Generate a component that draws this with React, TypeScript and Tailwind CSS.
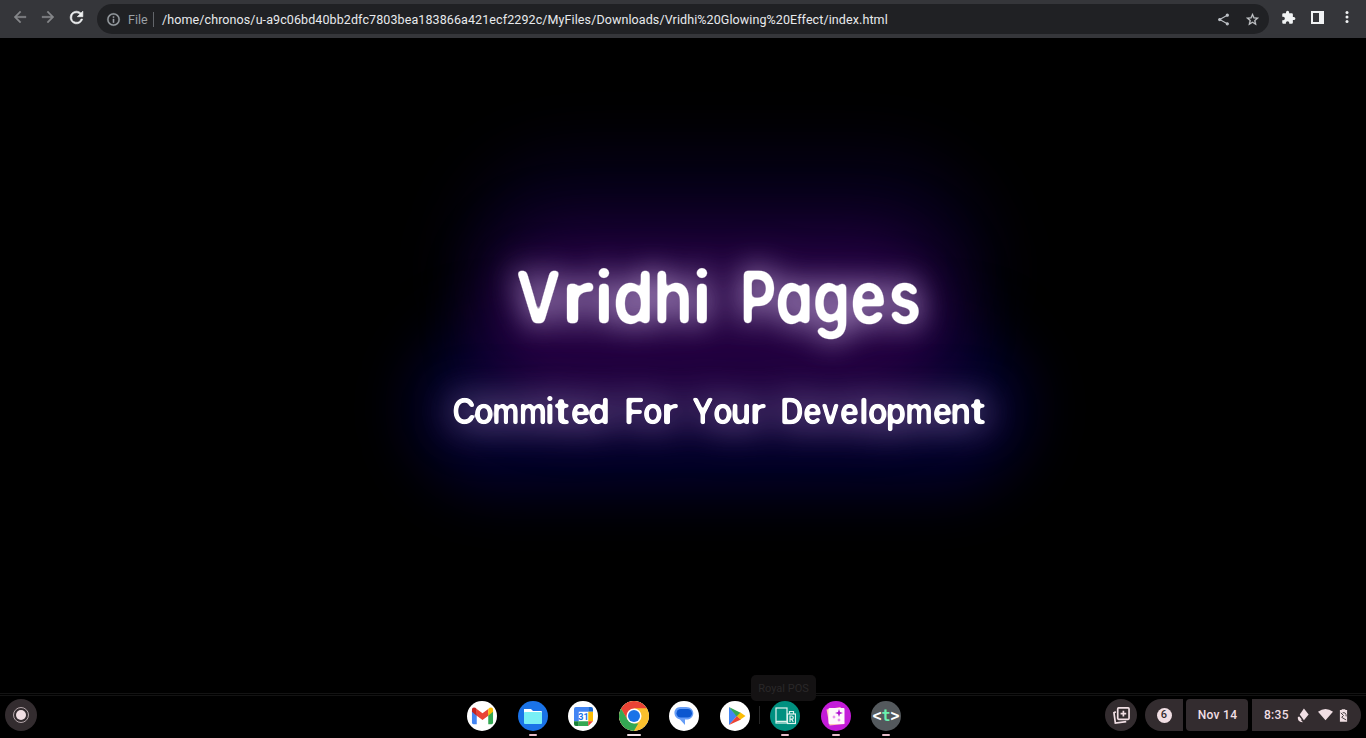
import React from "react";

type P = { className?: string };

const Dot = () => <span className="h-0.5 w-2 rounded-full bg-[#e8bfcb]" />;

function ShelfApp({ bg, run, children }: { bg: string; run?: "dot" | "bar"; children: React.ReactNode }) {
  return (
    <div className="flex h-[36px] w-[30px] flex-col items-center justify-between pb-[1px]">
      <div className={"flex h-[30px] w-[30px] shrink-0 items-center justify-center overflow-hidden rounded-full " + bg}>{children}</div>
      {run === "dot" && <Dot />}
      {run === "bar" && <span className="h-0.5 w-3.5 rounded-full bg-[#f1dfe4]" />}
    </div>
  );
}

function Arrow({ className }: P) {
  return (
    <svg viewBox="0 0 24 24" className={className} fill="#85878a" stroke="#85878a" strokeWidth=".5">
      <path d="M20 11H7.83l5.59-5.59L12 4l-8 8 8 8 1.41-1.41L7.83 13H20v-2z" />
    </svg>
  );
}

function Toolbar() {
  return (
    <header className="flex h-[38px] shrink-0 items-center bg-[#35363a]">
      <div className="mb-1 flex w-[97px] items-center gap-[10px] pl-[11px]">
        <Arrow className="size-[18px]" />
        <Arrow className="size-[18px] rotate-180" />
        <svg viewBox="0 0 24 24" className="size-[19px]" fill="#f1f3f4" stroke="#f1f3f4" strokeWidth=".8">
          <path d="M17.65 6.35A7.96 7.96 0 0 0 12 4a8 8 0 1 0 7.73 10h-2.08A6 6 0 1 1 12 6c1.66 0 3.14.69 4.22 1.78L13 11h7V4l-2.35 2.35z" />
        </svg>
      </div>
      <div className="flex h-[30px] w-[1172px] items-center rounded-full bg-[#202124] pl-[9px] font-[Roboto,sans-serif] text-[13px]">
        <svg viewBox="0 0 24 24" className="size-[15px]" fill="#9aa0a6" stroke="#9aa0a6" strokeWidth=".5">
          <path d="M11 7h2v2h-2zm0 4h2v6h-2zm1-9a10 10 0 1 0 0 20 10 10 0 0 0 0-20zm0 18a8 8 0 1 1 0-16 8 8 0 0 1 0 16z" />
        </svg>
        <span className="ml-[7px] mt-0.5 w-[25px] text-[12.5px] text-[#9aa0a6]">File</span>
        <span className="h-[15px] w-px bg-[#62656a]" />
        <span className="ml-2 mt-0.5 w-[1055px] whitespace-nowrap text-[12.5px] tracking-[0.1px] text-[#e8eaed]">/home/chronos/u-a9c06bd40bb2dfc7803bea183866a421ecf2292c/MyFiles/Downloads/Vridhi%20Glowing%20Effect/index.html</span>
        <svg viewBox="0 0 24 24" className="size-[13px] shrink-0" fill="#bdc1c6" stroke="#bdc1c6" strokeWidth="2">
          <path d="M19 4 5 12l14 8" fill="none" /><circle cx="19" cy="4" r="2" /><circle cx="5" cy="12" r="2" /><circle cx="19" cy="20" r="2" />
        </svg>
        <svg viewBox="0 0 24 24" className="ml-[15px] size-[15px] shrink-0" fill="#c8cacd" stroke="#c8cacd" strokeWidth=".5">
          <path d="m22 9.24-7.19-.62L12 2 9.19 8.63 2 9.24l5.46 4.73L5.82 21 12 17.27 18.18 21l-1.63-7.03L22 9.24zM12 15.4l-3.76 2.27 1-4.28-3.32-2.88 4.38-.38L12 6.1l1.71 4.04 4.38.38-3.32 2.88 1 4.28L12 15.4z" />
        </svg>
      </div>
      <div className="mb-1 flex items-center pl-[12px]">
        <svg viewBox="0 0 24 24" className="size-[15px]" fill="#f1f3f4">
          <path d="M20.5 11H19V7a2 2 0 0 0-2-2h-4V3.500a2.500 2.500 0 0 0-5 0V5H4a2 2 0 0 0-2 2v3.800h1.500a2.700 2.700 0 0 1 0 5.400H2V20c0 1.100.9 2 2 2h3.800v-1.500a2.700 2.700 0 0 1 5.400 0V22H17a2 2 0 0 0 2-2v-4h1.500a2.500 2.500 0 0 0 0-5z" />
        </svg>
        <span className="ml-[15px] h-[13px] w-[13px] border-2 border-r-[5px] border-[#f1f3f4]" />
        <svg viewBox="0 0 16 16" className="ml-[15px] size-4" fill="#f1f3f4">
          <circle cx="8" cy="3.500" r="1.500" /><circle cx="8" cy="8" r="1.500" /><circle cx="8" cy="12.500" r="1.500" />
        </svg>
      </div>
    </header>
  );
}

// Each letter: glyph, cell width in px, horizontal scale.
type Letter = [string, number, number];

const TITLE: Letter[] = [
  ["V", 43, 0.86], ["r", 36, 1.15], ["i", 16, 1], ["d", 42, 0.9], ["h", 39, 0.89], ["i", 18, 1],
  [" ", 30, 1],
  ["P", 34, 0.78], ["a", 38, 0.84], ["g", 37, 0.82], ["e", 37, 0.84], ["s", 35, 0.82],
];

const SUBTITLE: Letter[] = [
  ["C", 22, 0.9], ["o", 18, 0.91], ["m", 26, 0.84], ["m", 27, 0.87], ["i", 8, 1], ["t", 17, 1.2], ["e", 18, 0.9], ["d", 20, 0.96],
  [" ", 15, 1],
  ["F", 20, 0.97], ["o", 18, 0.91], ["r", 17, 1.2],
  [" ", 12, 1],
  ["Y", 23, 0.87], ["o", 17, 0.89], ["u", 19, 0.93], ["r", 16, 1.15],
  [" ", 14, 1],
  ["D", 23, 0.91], ["e", 19, 0.88], ["v", 17, 0.85], ["e", 20, 0.9], ["l", 10, 1], ["o", 18, 0.9], ["p", 19, 0.9], ["m", 26, 0.85], ["e", 20, 0.9], ["n", 18, 0.95], ["t", 16, 1.2],
];

function Lettering({ letters }: { letters: Letter[] }) {
  return (
    <>
      {letters.map(([ch, w, s], i) => (
        <span key={i} className="flex shrink-0 justify-center whitespace-pre" style={{ width: w }}>
          <span className="inline-block" style={{ transform: `scaleX(${s})` }}>{ch}</span>
        </span>
      ))}
    </>
  );
}

function Hero() {
  return (
    <main className="relative flex h-[656px] shrink-0 flex-col items-start overflow-hidden bg-black font-[Inter,sans-serif] text-white [font-feature-settings:'cv11']">
      <svg className="absolute size-0" aria-hidden="true">
        <filter id="round-lg" colorInterpolationFilters="sRGB">
          <feGaussianBlur stdDeviation="2.1" />
          <feComponentTransfer><feFuncA type="linear" slope="5" intercept="-1.7" /></feComponentTransfer>
        </filter>
        <filter id="round-sm" colorInterpolationFilters="sRGB">
          <feGaussianBlur stdDeviation="1.1" />
          <feComponentTransfer><feFuncA type="linear" slope="3.5" intercept="-1" /></feComponentTransfer>
        </filter>
      </svg>
      <div className="absolute left-[460px] top-[115px] h-[240px] w-[530px] rounded-[110px] bg-[#06001a] blur-[32px]" />
      <div className="absolute left-[410px] top-[285px] h-[170px] w-[620px] rounded-[85px] bg-[#03002c] blur-[28px]" />
      <div className="absolute left-[485px] top-[190px] h-[185px] w-[465px] rounded-[85px] bg-[#22003f] blur-[28px]" />
      <h1 className="relative ml-[517px] mt-[214px] flex h-[90px] items-center text-[72px] font-semibold leading-none">
        <span className="flex [filter:url(#round-lg)_drop-shadow(0_0_15px_#c0a2d6)_drop-shadow(0_0_16px_#60408488)]">
          <Lettering letters={TITLE} />
        </span>
      </h1>
      <h2 className="relative ml-[453px] mt-[45px] flex h-[50px] items-center text-[35.5px] font-semibold leading-none">
        <span className="flex [filter:url(#round-sm)_drop-shadow(0_0_18px_#a488ba)_drop-shadow(0_0_16px_#50388880)]">
          <Lettering letters={SUBTITLE} />
        </span>
      </h2>
    </main>
  );
}

function Shelf() {
  return (
    <footer className="relative flex h-[44px] shrink-0 items-start bg-black font-[Roboto,sans-serif]">
      <div className="absolute inset-x-0 top-[-1px] h-[3px] border-y border-[#131313]" />
      <div className="ml-[5px] mt-[5px] flex size-8 items-center justify-center rounded-full bg-[#332c2f]">
        <div className="flex size-4 items-center justify-center rounded-full border border-[#b5a7ab]"><span className="size-[10px] rounded-full bg-[#f1dfe4]" /></div>
      </div>
      <div className="ml-[430px] mt-[7px] flex w-[434px] items-start justify-between">
        <ShelfApp bg="bg-white">
          <svg viewBox="0 0 24 18" className="w-[23px]">
            <path d="M1 4v12.500q0 1.500 1.500 1.500H6V7z" fill="#4285f4" /><path d="M18 7v11h3.500q1.500 0 1.500-1.500V4z" fill="#34a853" /><path d="m6 2 6 4.500L18 2v7l-6 4.500L6 9z" fill="#ea4335" /><path d="M1 3c0-3 3-3 5-1v7L1 5z" fill="#c5221f" /><path d="M18 2c2-2 5-2 5 1v2l-5 4z" fill="#fbbc04" />
          </svg>
        </ShelfApp>
        <ShelfApp bg="bg-[#1a73e8]" run="dot">
          <svg viewBox="0 0 20 16" className="w-5"><path d="M1 1h7l2 2h8q1 0 1 1v4H1z" fill="#fff" /><rect x="1" y="4" width="18" height="12" rx="1" fill="#78eff5" /></svg>
        </ShelfApp>
        <ShelfApp bg="bg-white">
          <svg viewBox="0 0 20 20" className="size-[19px]"><path d="M0 2q0-2 2-2h13v5H5v10H0z" fill="#4285f4" /><path d="M15 0h3q2 0 2 2v3h-5z" fill="#1967d2" /><path d="M15 5h5v10h-5z" fill="#fbbc04" /><path d="M0 15h5v5H2q-2 0-2-2z" fill="#188038" /><path d="M5 15h10v5H5z" fill="#34a853" /><path d="M15 15h5l-5 5z" fill="#ea4335" /><text x="10" y="13.500" textAnchor="middle" fontSize="9.500" fontWeight="700" fill="#1a73e8">31</text></svg>
        </ShelfApp>
        <ShelfApp bg="bg-white" run="bar">
          <svg viewBox="0 0 30 30"><circle cx="15" cy="15" r="15" fill="#fbc02d" /><path d="M2 7.500A15 15 0 0 1 28 7.500H15L8.500 18.800z" fill="#ea4335" /><path d="M2 7.500 8.500 18.800 15 22.500h6.500L15 30A15 15 0 0 1 2 7.500z" fill="#34a853" /><path d="m21.500 18.800-6.500 11A15 15 0 0 0 28 7.500H15z" fill="#fbc02d" /><circle cx="15" cy="15" r="7.500" fill="#fff" /><circle cx="15" cy="15" r="6" fill="#1a73e8" /></svg>
        </ShelfApp>
        <ShelfApp bg="bg-white">
          <svg viewBox="0 0 20 20" className="size-5"><path d="M6.500 1H12c9.500 0 9.500 11.500 1.500 12.500H11V19l-5-5.500C-1.500 12-1.500 1 6.500 1z" fill="#669df6" /><rect x="2.500" y="3" width="15.500" height="8.500" rx="4.250" fill="#0b57d0" /></svg>
        </ShelfApp>
        <ShelfApp bg="bg-white">
          <svg viewBox="0 0 20 20" className="ml-1 size-5"><path d="M2 1v18l8-9z" fill="#4285f4" /><path d="m2 1 12 6-4 4z" fill="#34a853" /><path d="m2 19 8-9 4 3.500z" fill="#ea4335" /><path d="m13.500 6.500 5 3.500-5 3.500-3.500-3.500z" fill="#fbbc04" /></svg>
        </ShelfApp>
        <ShelfApp bg="bg-[#009080]" run="dot">
          <svg viewBox="0 0 21 18" className="h-[18px] w-[21px] shrink-0" fill="none" stroke="#e1f3ef" strokeWidth="1.200">
            <rect x="1" y="1" width="11" height="15" /><path d="M1 14.300h11" />
            <path d="M14.500 7V4.500h4V7" /><rect x="12.500" y="7" width="8" height="9.500" fill="#009080" />
            <path d="M15 15V9h1.700q1.500 0 1.500 1.600T16.700 12.200H15M16.700 12.200 18.300 15" />
          </svg>
        </ShelfApp>
        <ShelfApp bg="bg-[#c41bd9]" run="dot">
          <svg viewBox="0 0 20 20" className="size-5"><path d="m.5 3.500 14-2.500 4 17-15 1.500z" fill="#ffc9b8" /><rect x="2.500" y="2" width="16" height="16" rx="1" fill="#fff8fb" /><path d="m13 3 1 3 3 1-3 1-1 3-1-3-3-1 3-1z" fill="#b012d0" /><path d="m8 9 .6 1.400L10 11l-1.400.6L8 13l-.6-1.400L6 11l1.400-.6zM13 12l.6 1.400L15 14l-1.400.6L13 16l-.6-1.400L11 14l1.400-.6z" fill="#e070e8" /></svg>
        </ShelfApp>
        <ShelfApp bg="bg-[#54595d]" run="dot">
          <span className="whitespace-nowrap font-['DejaVu_Sans_Mono',monospace] text-[15px] font-bold text-white">&lt;<span className="text-[#69f0ae]">t</span>&gt;</span>
        </ShelfApp>
      </div>
      <span className="absolute left-[759px] top-3 h-[18px] w-px bg-[#262626]" />
      <div className="absolute left-[751px] top-[-19px] flex h-[26px] w-[65px] items-center justify-center rounded-[5px] bg-[#141213] pt-0.5 text-[11px] text-[#2a2829]">Royal POS</div>
      <div className="ml-auto mr-[5px] mt-[5px] flex text-[12px] font-medium tracking-[.3px] text-[#f1dfe4]">
        <div className="mr-2 flex size-8 items-center justify-center rounded-full bg-[#332c2f]">
          <svg viewBox="0 0 18 18" className="size-[17px]" fill="none" stroke="#f1dfe4" strokeWidth="1.800"><rect x="5" y="1" width="12" height="12" rx="1" /><path d="m3 5-2 1 1.500 11L14 15.500M11 4v6M8 7h6" /></svg>
        </div>
        <div className="mr-[3px] flex h-8 w-[38px] items-center justify-center rounded-l-full rounded-r bg-[#332c2f]"><span className="flex size-[15px] items-center justify-center rounded-full bg-[#f1dfe4] text-[11px] tracking-normal text-[#332c2f]">6</span></div>
        <div className="mr-1 flex h-8 w-[62px] items-center justify-center rounded bg-[#332c2f] pl-px">Nov 14</div>
        <div className="flex h-8 w-[109px] items-center rounded-l rounded-r-full bg-[#332c2f] pl-3">
          <span className="w-[33px]">8:35</span>
          <svg viewBox="0 0 12 16" className="h-[15px] w-3" fill="#f1dfe4"><path d="m7 .5 5 6.500-5 6L2.500 7z" /><path d="M.5 9.500 2 9l2.500 3L4 13l2 2.200q-5 0-5.500-4z" /></svg>
          <svg viewBox="0 0 16 12" className="ml-[9px] w-[15px]" fill="#f1dfe4"><path d="M0 3q8-6 16 0l-8 9z" /></svg>
          <svg viewBox="0 0 10 14" className="ml-1.5 h-[13px] w-[9px]" fill="#f1dfe4"><path d="M3 0h4v1h2v13H1V1h2z" /><path d="m2 4 3 3-2 2 5 3M4 4q4-1 4 4" fill="none" stroke="#332c2f" /></svg>
        </div>
      </div>
    </footer>
  );
}

export default function App() {
  return (
    <div className="flex h-[738px] w-[1366px] flex-col overflow-hidden bg-black">
      <Toolbar />
      <Hero />
      <Shelf />
    </div>
  );
}
